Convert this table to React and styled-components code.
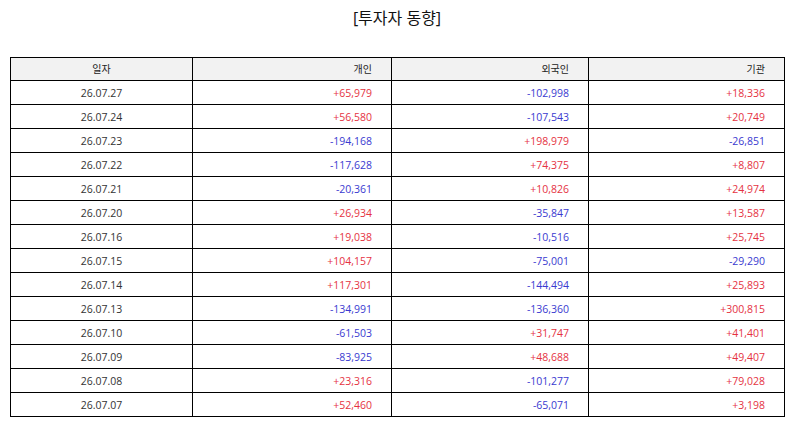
import React from 'react';
import styled, { createGlobalStyle } from 'styled-components';

const GlobalStyle = createGlobalStyle`
    body {
        margin: 0;
        background: #fff;
        font-family: "Open Sans", "Noto Sans CJK KR", sans-serif;
    }
`;

const Page = styled.div`
    width: 794px;
    padding: 4px 10px 0;
    box-sizing: border-box;
`;

const Title = styled.h1`
    margin: 0;
    height: 32px;
    line-height: 28px;
    text-align: center;
    font-size: 16px;
    font-weight: 400;
    color: #111;
`;

const Table = styled.table`
    margin-top: 21px;
    width: 774px;
    border-collapse: collapse;
    table-layout: fixed;
    font-size: 10.5px;
    line-height: 14px;
    color: #333;
`;

const HeadCell = styled.th`
    height: 22px;
    padding: 0 19px;
    border: 1px solid #000;
    background: #f2f2f2;
    font-size: 10px;
    font-weight: 400;
    color: #222;
    text-align: ${(p) => (p.$left ? 'center' : 'right')};
`;

const Cell = styled.td`
    height: 23px;
    padding: 0 19px;
    border: 1px solid #000;
    text-align: ${(p) => (p.$center ? 'center' : 'right')};
    color: ${(p) => (p.$value == null ? '#333' : p.$value < 0 ? '#3a3ad0' : '#e5333f')};
`;

const rows = [
    ['26.07.27', 65979, -102998, 18336],
    ['26.07.24', 56580, -107543, 20749],
    ['26.07.23', -194168, 198979, -26851],
    ['26.07.22', -117628, 74375, 8807],
    ['26.07.21', -20361, 10826, 24974],
    ['26.07.20', 26934, -35847, 13587],
    ['26.07.16', 19038, -10516, 25745],
    ['26.07.15', 104157, -75001, -29290],
    ['26.07.14', 117301, -144494, 25893],
    ['26.07.13', -134991, -136360, 300815],
    ['26.07.10', -61503, 31747, 41401],
    ['26.07.09', -83925, 48688, 49407],
    ['26.07.08', 23316, -101277, 79028],
    ['26.07.07', 52460, -65071, 3198],
];

// 부호 붙여서 천단위 콤마
const fmt = (n) => (n > 0 ? '+' : '-') + Math.abs(n).toLocaleString('en-US');

const App = () => {
    return (
        <Page>
            <GlobalStyle />
            <Title>[투자자 동향]</Title>
            <Table>
                <colgroup>
                    <col style={{ width: 182 }} />
                    <col style={{ width: 199 }} />
                    <col style={{ width: 197 }} />
                    <col style={{ width: 196 }} />
                </colgroup>
                <thead>
                    <tr>
                        <HeadCell $left>일자</HeadCell>
                        <HeadCell>개인</HeadCell>
                        <HeadCell>외국인</HeadCell>
                        <HeadCell>기관</HeadCell>
                    </tr>
                </thead>
                <tbody>
                    {rows.map(([date, ...vals]) => (
                        <tr key={date}>
                            <Cell $center>{date}</Cell>
                            {vals.map((v, i) => (
                                <Cell key={i} $value={v}>{fmt(v)}</Cell>
                            ))}
                        </tr>
                    ))}
                </tbody>
            </Table>
        </Page>
    );
};

export default App;
